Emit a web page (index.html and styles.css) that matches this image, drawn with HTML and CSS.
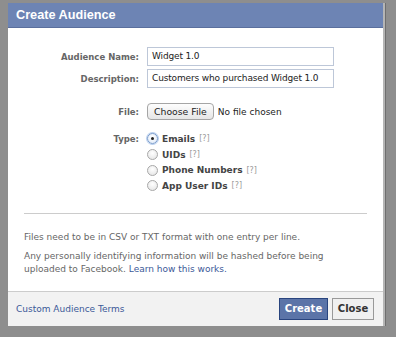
FILE: index.html
```html
<!DOCTYPE html>
<html>
<head>
<meta charset="utf-8">
<link rel="stylesheet" href="styles.css">
</head>
<body>
<div class="frame">
  <div class="dialog">
    <div class="header">Create Audience</div>
    <div class="content">
      <div class="form">
        <div class="label">Audience Name:</div>
        <div class="field"><div class="input">Widget 1.0</div></div>
        <div class="label">Description:</div>
        <div class="field"><div class="input">Customers who purchased Widget 1.0</div></div>
        <div class="label file-label">File:</div>
        <div class="field file-field"><span class="choose">Choose File</span><span class="nofile">No file chosen</span></div>
        <div class="label type-label">Type:</div>
        <div class="field types">
          <div class="opt"><span class="radio checked"></span><b>Emails</b><span class="q">[?]</span></div>
          <div class="opt"><span class="radio"></span><b>UIDs</b><span class="q">[?]</span></div>
          <div class="opt"><span class="radio"></span><b>Phone Numbers</b><span class="q">[?]</span></div>
          <div class="opt"><span class="radio"></span><b>App User IDs</b><span class="q">[?]</span></div>
        </div>
      </div>
      <div class="sep"></div>
      <p class="note first">Files need to be in CSV or TXT format with one entry per line.</p>
      <div class="note">
        <div class="line">Any personally identifying information will be hashed before being</div>
        <div class="line"><span>uploaded to Facebook.</span><span class="link">Learn how this works.</span></div>
      </div>
    </div>
    <div class="footer">
      <span class="terms">Custom Audience Terms</span>
      <div class="buttons">
        <span class="btn create">Create</span>
        <span class="btn close">Close</span>
      </div>
    </div>
  </div>
</div>
</body>
</html>
```

FILE: styles.css
```css
html, body {
  margin: 0;
  padding: 0;
}
body {
  width: 396px;
  height: 337px;
  overflow: hidden;
  background: #8e8e8e;
  font-family: "DejaVu Sans", sans-serif;
  font-size: 9px;
  color: #333;
}
.frame {
  padding: 3px 0 0 8px;
}
.dialog {
  width: 375px;
  height: 323px;
  background: #fff;
  display: flex;
  flex-direction: column;
  box-shadow: 2px 0 0 #b5b5b5, 3px 0 0 #6f6f6f;
}
.header {
  height: 24px;
  line-height: 24px;
  background: #6d84b4;
  color: #fff;
  font-family: "Liberation Sans", sans-serif;
  font-weight: bold;
  font-size: 12.7px;
  padding-left: 8px;
  border-bottom: 1px solid #5a6f9d;
}
.content {
  flex: 1;
  padding: 19px 16px 0 16px;
}
.form {
  display: grid;
  grid-template-columns: 115px 1fr;
  column-gap: 8px;
  row-gap: 3px;
  align-items: center;
}
.label {
  text-align: right;
  font-weight: bold;
  color: #666;
  font-size: 8.5px;
}
.input {
  width: 187px;
  height: 19px;
  box-sizing: border-box;
  border: 1px solid #bdc7d8;
  padding: 0 4px;
  line-height: 17px;
  color: #222;
  font-size: 9px;
  letter-spacing: -0.15px;
  white-space: nowrap;
  overflow: hidden;
}
.file-label, .file-field {
  margin-top: 12px;
}
.file-field {
  display: flex;
  align-items: center;
}
.choose {
  display: inline-block;
  height: 17px;
  box-sizing: border-box;
  line-height: 15px;
  padding: 0 6px;
  border: 1px solid #a5a5a5;
  border-radius: 4px;
  background: linear-gradient(#fdfdfd, #e6e6e6);
  color: #222;
  font-size: 9.3px;
}
.nofile {
  margin-left: 4px;
  color: #222;
  font-size: 9px;
}
.type-label, .types {
  margin-top: 8px;
  align-self: start;
}
.type-label {
  line-height: 16px;
}
.opt {
  height: 15.7px;
  display: flex;
  align-items: center;
}
.opt b {
  color: #444;
  margin-left: 4px;
}
.q {
  color: #999;
  margin-left: 4px;
  font-size: 8px;
}
.radio {
  width: 11px;
  height: 11px;
  box-sizing: border-box;
  border-radius: 50%;
  border: 1px solid #a8a8a8;
  background: radial-gradient(circle at 50% 35%, #fff, #e2e2e2);
  position: relative;
}
.radio.checked {
  border-color: #7a9ccc;
  box-shadow: 0 0 0 1px #b9cfee;
  background: radial-gradient(circle at 50% 35%, #fff, #dfe9f7);
}
.radio.checked::after {
  content: "";
  position: absolute;
  left: 3px;
  top: 3px;
  width: 3px;
  height: 3px;
  border-radius: 50%;
  background: #222;
}
.sep {
  height: 1px;
  background: #ccc;
  margin-top: 19px;
}
.note {
  margin: 17px 0 0 0;
  color: #666;
  line-height: 13px;
  font-size: 9px;
}
.note + .note {
  margin-top: 6px;
}
.line {
  display: flex;
  gap: 3px;
}
.link {
  color: #3b5998;
}
.footer {
  height: 34px;
  background: #f2f2f2;
  border-top: 1px solid #ccc;
  display: flex;
  align-items: center;
  justify-content: space-between;
  padding: 0 9px 0 8px;
}
.terms {
  color: #3b5998;
  font-size: 9px;
}
.buttons {
  display: flex;
  gap: 4px;
}
.btn {
  height: 22px;
  box-sizing: border-box;
  line-height: 20px;
  font-weight: bold;
  font-size: 10px;
  text-align: center;
}
.create {
  width: 49px;
  background: #5b74a8;
  border: 1px solid #29447e;
  color: #fff;
}
.close {
  width: 42px;
  background: #f0f0f0;
  border: 1px solid #999;
  color: #333;
}
```
